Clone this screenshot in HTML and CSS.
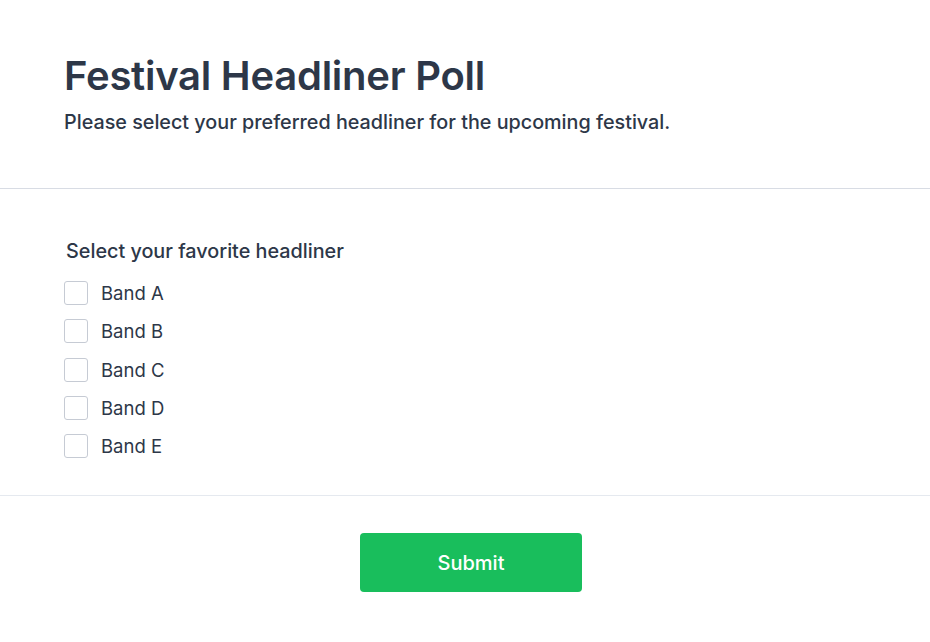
FILE: index.html
```html
<!DOCTYPE html>
<html lang="en">
<head>
<meta charset="utf-8">
<title>Festival Headliner Poll</title>
<link rel="stylesheet" href="styles.css">
</head>
<body>
<div class="card">
  <header class="head">
    <h1 class="title">Festival Headliner Poll</h1>
    <p class="subtitle">Please select your preferred headliner for the upcoming festival.</p>
  </header>
  <section class="body">
    <div class="question">Select your favorite headliner</div>
    <div class="options">
      <label class="option"><span class="box"></span><span class="opt-text">Band A</span></label>
      <label class="option"><span class="box"></span><span class="opt-text">Band B</span></label>
      <label class="option"><span class="box"></span><span class="opt-text">Band C</span></label>
      <label class="option"><span class="box"></span><span class="opt-text">Band D</span></label>
      <label class="option"><span class="box"></span><span class="opt-text">Band E</span></label>
    </div>
  </section>
  <footer class="foot">
    <button class="submit" type="button">Submit</button>
  </footer>
</div>
</body>
</html>
```

FILE: styles.css
```css
* { box-sizing: border-box; }
html, body {
  margin: 0;
  padding: 0;
  background: #ffffff;
}
body {
  font-family: Inter, "Noto Sans", "Liberation Sans", sans-serif;
  color: #2d3748;
}
.card {
  width: 930px;
  min-height: 642px;
  background: #ffffff;
}
.head {
  padding: 52px 64px 52px 64px;
  border-bottom: 1px solid #d8dce4;
}
.title {
  margin: 0;
  font-size: 40px;
  line-height: 48px;
  font-weight: 600;
  letter-spacing: -0.25px;
  color: #2d3748;
}
.subtitle {
  margin: 8px 0 0 0;
  font-size: 19.75px;
  line-height: 28px;
  font-weight: 500;
  color: #2d3748;
}
.body {
  padding: 48px 64px 35px 64px;
  border-bottom: 1px solid #e5e9ef;
}
.question {
  padding-left: 2px;
  font-size: 19.8px;
  line-height: 28px;
  font-weight: 500;
  color: #2d3748;
}
.options {
  margin-top: 14px;
  display: flex;
  flex-direction: column;
  gap: 10.3px;
}
.option {
  display: flex;
  align-items: center;
  height: 28px;
  gap: 13px;
  cursor: pointer;
}
.box {
  width: 24px;
  height: 24px;
  border: 1px solid #c6cbd4;
  border-radius: 3px;
  background: #ffffff;
  flex: none;
}
.opt-text {
  font-size: 18.5px;
  line-height: 28px;
  font-weight: 400;
  color: #2d3748;
}
.foot {
  display: flex;
  justify-content: center;
  padding: 37px 0 38px 12px;
}
.submit {
  width: 222px;
  height: 59px;
  border: none;
  border-radius: 4px;
  background: #19be5c;
  color: #ffffff;
  font-family: Inter, "Noto Sans", "Liberation Sans", sans-serif;
  font-size: 20px;
  font-weight: 500;
  cursor: pointer;
}
```
